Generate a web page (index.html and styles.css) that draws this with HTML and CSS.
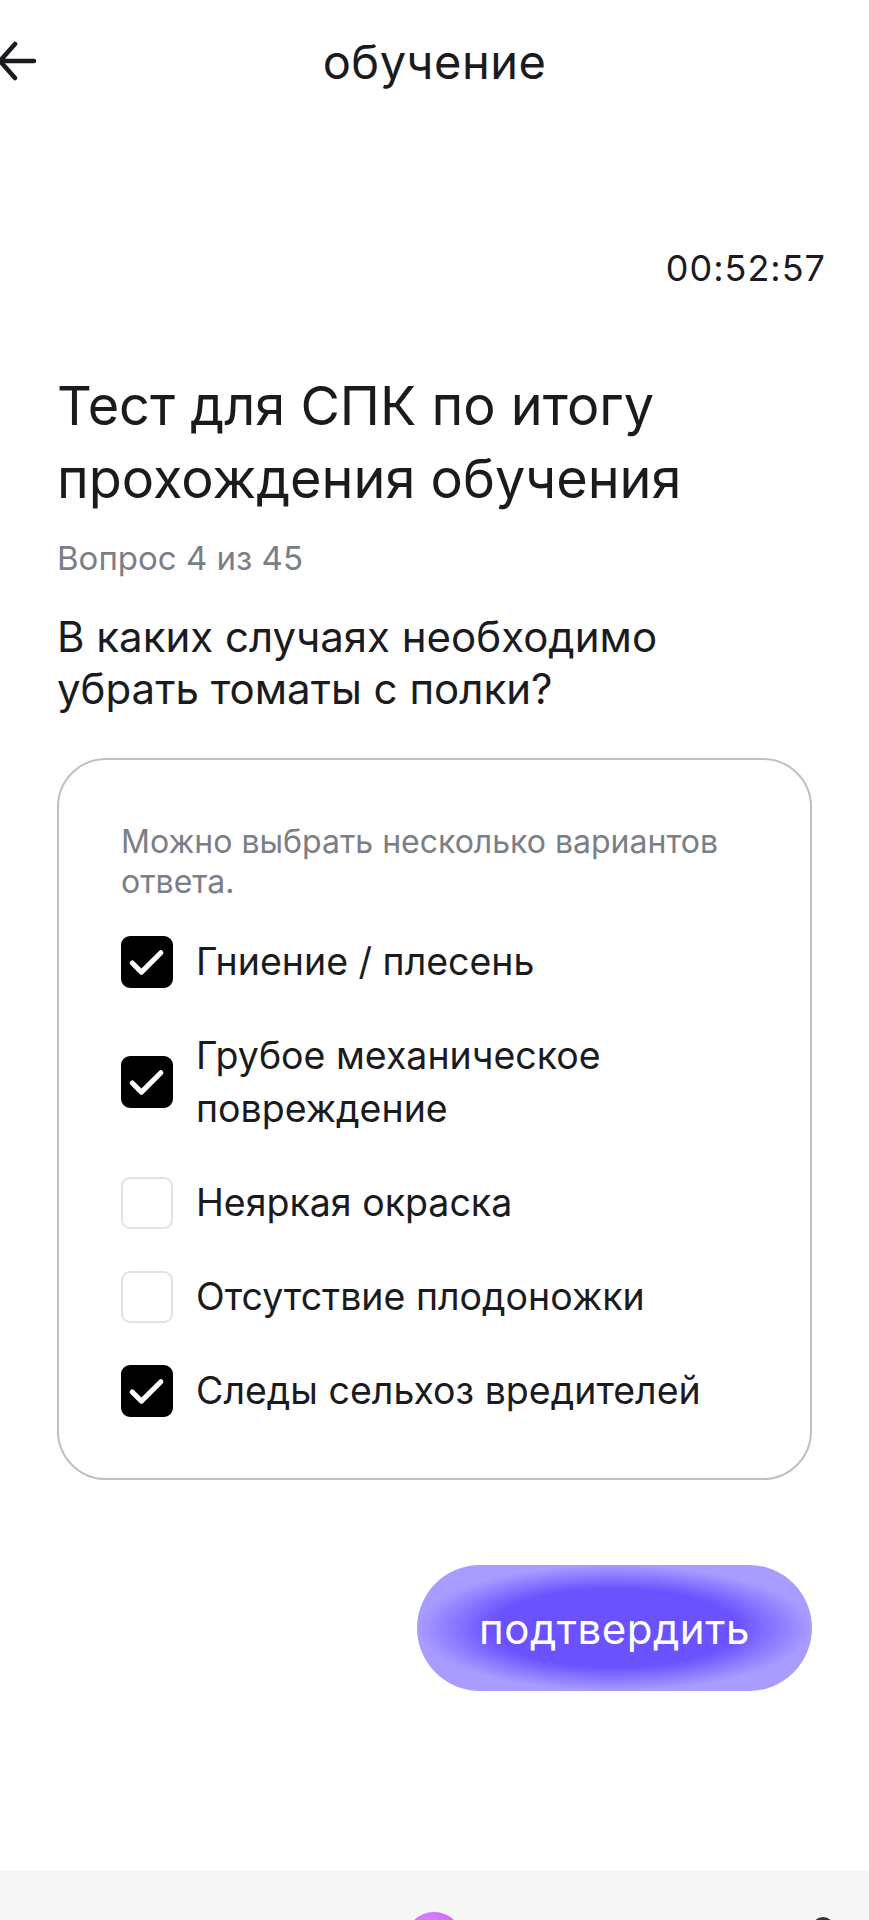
FILE: index.html
```html
<!DOCTYPE html>
<html lang="ru">
<head>
    <meta charset="UTF-8">
    <meta name="viewport" content="width=device-width, initial-scale=1.0">
    <title>обучение</title>
    <link rel="stylesheet" href="styles.css">
</head>
<body>

    <div class="header">
        <div class="back">
            <svg width="40" height="44" viewBox="0 0 40 44">
                <path d="M36 22 H2 M2 22 L17 5 M2 22 L17 39" stroke="#1b1b1f" stroke-width="4.5" stroke-linecap="round" stroke-linejoin="round" fill="none"/>
            </svg>
        </div>
        <h1 class="title">обучение</h1>
        <div></div>
    </div>

    <div class="timer" id="timer">00:52:57</div>

    <div class="content">
        <h2 class="test-name">Тест для СПК по итогу прохождения обучения</h2>
        <div class="counter">Вопрос 4 из 45</div>
        <div class="question">В каких случаях необходимо убрать томаты с полки?</div>

        <div class="card">
            <div class="hint">Можно выбрать несколько вариантов ответа.</div>
            <div class="options">
                <label class="option checked">
                    <span class="box"></span>
                    <span class="text">Гниение / плесень</span>
                </label>
                <label class="option checked">
                    <span class="box"></span>
                    <span class="text">Грубое механическое<br>повреждение</span>
                </label>
                <label class="option">
                    <span class="box"></span>
                    <span class="text">Неяркая окраска</span>
                </label>
                <label class="option">
                    <span class="box"></span>
                    <span class="text">Отсутствие плодоножки</span>
                </label>
                <label class="option checked">
                    <span class="box"></span>
                    <span class="text">Следы сельхоз вредителей</span>
                </label>
            </div>
        </div>

        <div class="actions">
            <button class="submit">подтвердить</button>
        </div>
    </div>

    <div class="navbar">
        <div class="nav-ball"></div>
        <div class="nav-icon"></div>
    </div>

    <script>
        const options = document.querySelectorAll(".option");

        options.forEach(option => {
            option.addEventListener("click", () => option.classList.toggle("checked"));
        });
    </script>
</body>
</html>
```

FILE: styles.css
```css
* {
    box-sizing: border-box;
}

html, body {
    margin: 0;
    padding: 0;
}

body {
    font-family: Inter, "Noto Sans", sans-serif;
    color: #1b1b1f;
    background-color: #fff;
    height: 1920px;
    overflow: hidden;
    display: flex;
    flex-direction: column;
}

.header {
    height: 122px;
    display: grid;
    grid-template-columns: 1fr auto 1fr;
    align-items: center;
}

.back {
    display: flex;
    align-items: center;
    margin-left: -2px;
}

.title {
    margin: 0;
    font-size: 47px;
    font-weight: 400;
    letter-spacing: 0.5px;
}

.timer {
    margin-top: 126px;
    padding-right: 43px;
    text-align: right;
    font-size: 36px;
    line-height: 40px;
    letter-spacing: 1px;
}

.content {
    padding: 0 57px;
}

.test-name {
    margin: 81px 0 0;
    font-size: 54px;
    line-height: 73px;
    font-weight: 400;
    max-width: 720px;
}

.counter {
    margin-top: 25px;
    font-size: 33px;
    line-height: 36px;
    color: #7b7e86;
}

.question {
    margin-top: 35px;
    font-size: 42px;
    line-height: 52px;
    max-width: 700px;
}

.card {
    margin-top: 43px;
    border: 2px solid #bfbfc4;
    border-radius: 49px;
    padding: 62px 50px 61px 62px;
}

.hint {
    font-size: 32px;
    line-height: 40px;
    color: #7b7e86;
    max-width: 620px;
}

.options {
    margin-top: 33px;
    display: flex;
    flex-direction: column;
    gap: 41px;
}

.option {
    display: flex;
    align-items: center;
    gap: 23px;
    cursor: pointer;
}

.box {
    flex: none;
    width: 52px;
    height: 52px;
    border-radius: 9px;
    border: 2px solid #e2e2e5;
    background-color: #fff;
}

.option.checked .box {
    border-color: #000;
    background-color: #000;
    background-image: url("data:image/svg+xml,%3Csvg xmlns='http://www.w3.org/2000/svg' viewBox='0 0 52 52'%3E%3Cpath d='M10 27 L20 37 L41 16' stroke='white' stroke-width='5.5' stroke-linecap='round' stroke-linejoin='round' fill='none'/%3E%3C/svg%3E");
    background-size: 100% 100%;
}

.text {
    font-size: 37.5px;
    line-height: 53px;
}

.actions {
    margin-top: 85px;
    display: flex;
    justify-content: flex-end;
}

.submit {
    width: 395px;
    height: 126px;
    border: none;
    border-radius: 63px;
    background: radial-gradient(closest-side, #6a52ff 62%, #a99cff 100%);
    color: #fff;
    font-family: Inter, "Noto Sans", sans-serif;
    font-size: 42px;
    letter-spacing: 0.5px;
    cursor: pointer;
}

.navbar {
    margin-top: auto;
    height: 50px;
    background-color: #f7f7f8;
    position: relative;
}

.nav-ball {
    position: absolute;
    left: 405px;
    top: 42px;
    width: 58px;
    height: 58px;
    border-radius: 50%;
    background: radial-gradient(circle at 40% 30%, #e08aff, #b04cff);
}

.nav-icon {
    position: absolute;
    left: 812px;
    top: 47px;
    width: 22px;
    height: 22px;
    border-radius: 50%;
    border: 3px solid #333;
}
```
